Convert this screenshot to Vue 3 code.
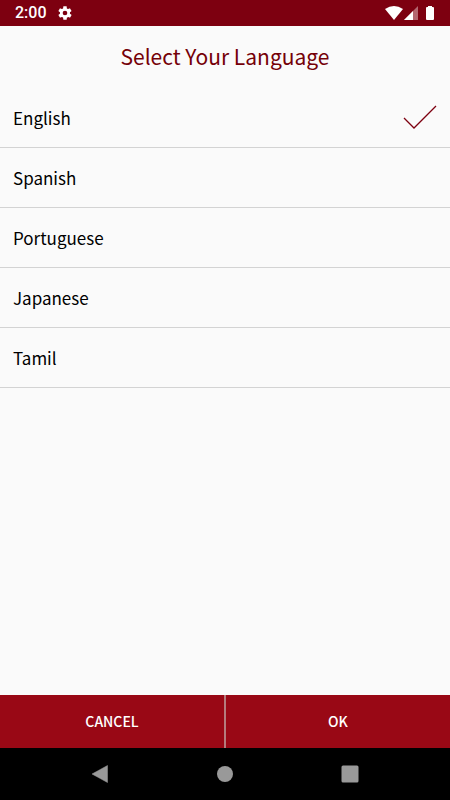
<script setup>
import { ref } from 'vue'

const languages = [
    { id: 'en', name: 'English' },
    { id: 'es', name: 'Spanish' },
    { id: 'pt', name: 'Portuguese' },
    { id: 'ja', name: 'Japanese' },
    { id: 'ta', name: 'Tamil' }
]

const saved = ref('en')
const selected = ref('en')

// Cancel goes back to the last confirmed language
const cancel = () => {
    selected.value = saved.value
}

const confirm = () => {
    saved.value = selected.value
}
</script>

<template>
    <div class="screen">
        <div class="status-bar">
            <span class="clock">2:00</span>
            <svg class="gear" viewBox="0 0 24 24" width="16" height="16" aria-hidden="true">
                <path fill="#fff" fill-rule="evenodd" d="M19.4 13c0-.3.1-.6.1-1s0-.7-.1-1l2.1-1.6c.2-.1.3-.4.1-.6l-2-3.5c-.1-.2-.4-.3-.6-.2l-2.5 1c-.5-.4-1.1-.7-1.7-1L14.5 2.4c0-.2-.3-.4-.5-.4h-4c-.3 0-.5.2-.5.4L9.1 5.1c-.6.2-1.2.6-1.7 1l-2.5-1c-.2-.1-.5 0-.6.2l-2 3.5c-.1.2-.1.5.1.6l2.1 1.6c0 .3-.1.7-.1 1s0 .7.1 1l-2.1 1.6c-.2.1-.3.4-.1.6l2 3.5c.1.2.4.3.6.2l2.5-1c.5.4 1.1.7 1.7 1l.4 2.7c0 .2.2.4.5.4h4c.2 0 .5-.2.5-.4l.4-2.7c.6-.2 1.2-.6 1.7-1l2.5 1c.2.1.5 0 .6-.2l2-3.5c.1-.2.1-.5-.1-.6zM12 15.5a3.5 3.5 0 1 1 0-7 3.5 3.5 0 0 1 0 7z" />
            </svg>
            <div class="indicators">
                <svg viewBox="0 0 18 14" width="18" height="14" aria-hidden="true">
                    <path fill="#fff" d="M0 3Q9-3 18 3L9 14z" />
                </svg>
                <svg class="signal" viewBox="0 0 14 14" width="14" height="14" aria-hidden="true">
                    <path fill="#b3666f" d="M14 0v14H0z" />
                    <path fill="#fff" d="M9 5v9H0z" />
                </svg>
                <svg class="battery" viewBox="0 0 8 14" width="8" height="14" aria-hidden="true">
                    <path fill="#fff" d="M2 0h4v1h1q1 0 1 1v11q0 1-1 1H1q-1 0-1-1V2q0-1 1-1h1z" />
                </svg>
            </div>
        </div>

        <main class="content">
            <h1>Select Your Language</h1>
            <div role="radiogroup" aria-label="Select Your Language">
                <label v-for="lang in languages" :key="lang.id" class="row">
                    <input v-model="selected" type="radio" name="language" :value="lang.id">
                    <span class="name">{{ lang.name }}</span>
                    <svg v-if="selected === lang.id" viewBox="0 0 34 26" width="34" height="26" aria-hidden="true">
                        <path d="M1 13l10 10L33 1" fill="none" stroke="#7d0010" stroke-width="1.3" />
                    </svg>
                </label>
            </div>
        </main>

        <div class="actions">
            <button type="button" @click="cancel">CANCEL</button>
            <button type="button" @click="confirm">OK</button>
        </div>

        <nav class="nav-bar">
            <button type="button" aria-label="Back">
                <svg viewBox="0 0 18 18" width="18" height="18">
                    <path fill="#999" d="M16.5.5v17L1 9z" stroke="#999" stroke-linejoin="round" stroke-width=".5" />
                </svg>
            </button>
            <button type="button" aria-label="Home">
                <svg viewBox="0 0 18 18" width="18" height="18">
                    <circle cx="9" cy="9" r="8" fill="#999" />
                </svg>
            </button>
            <button type="button" aria-label="Recent apps">
                <svg viewBox="0 0 18 18" width="18" height="18">
                    <rect x=".5" y=".5" width="17" height="17" rx="1.5" fill="#999" />
                </svg>
            </button>
        </nav>
    </div>
</template>

<style>
body {
    background: #fafafa;
}
</style>

<style scoped>
.screen {
    display: flex;
    flex-direction: column;
    min-height: 100vh;
    background: #fafafa;
    font-family: "Noto Sans CJK SC", "Noto Sans", sans-serif;
}

svg {
    display: block;
}

.status-bar {
    display: flex;
    align-items: center;
    height: 26px;
    padding: 0 16px 0 15px;
    background: #7d0010;
    color: #fff;
}

.clock {
    font-family: Roboto, sans-serif;
    font-size: 16px;
    font-weight: 500;
    line-height: 28px;
}

.gear {
    margin-left: 10px;
}

.indicators {
    display: flex;
    align-items: center;
    margin-left: auto;
}

.signal {
    margin-left: 1px;
}

.battery {
    margin-left: 8px;
}

.content {
    flex: 1;
}

h1 {
    margin: 0;
    padding-bottom: 2px;
    color: #750008;
    font-size: 21px;
    font-weight: 400;
    line-height: 60px;
    text-align: center;
}

.row {
    display: flex;
    align-items: center;
    height: 60px;
    padding: 0 13px;
    box-sizing: border-box;
    border-bottom: 1px solid #d3d3d3;
    color: #000;
    font-size: 17px;
    cursor: pointer;
}

.row input {
    appearance: none;
    width: 0;
    height: 0;
    margin: 0;
}

.name {
    flex: 1;
}

.actions {
    display: flex;
    height: 53px;
    background: #990815;
}

.actions button {
    flex: 1;
    padding: 0 0 2px;
    border: none;
    background: none;
    color: #fff;
    font-family: inherit;
    font-size: 14px;
    font-weight: 500;
    cursor: pointer;
}

.actions button + button {
    border-left: 2px solid #b57b7d;
}

.nav-bar {
    display: grid;
    grid-template-columns: repeat(3, 1fr);
    height: 52px;
    padding: 0 37px;
    background: #000;
}

.nav-bar button {
    display: flex;
    align-items: center;
    justify-content: center;
    padding: 0;
    border: none;
    background: none;
    cursor: pointer;
}
</style>
